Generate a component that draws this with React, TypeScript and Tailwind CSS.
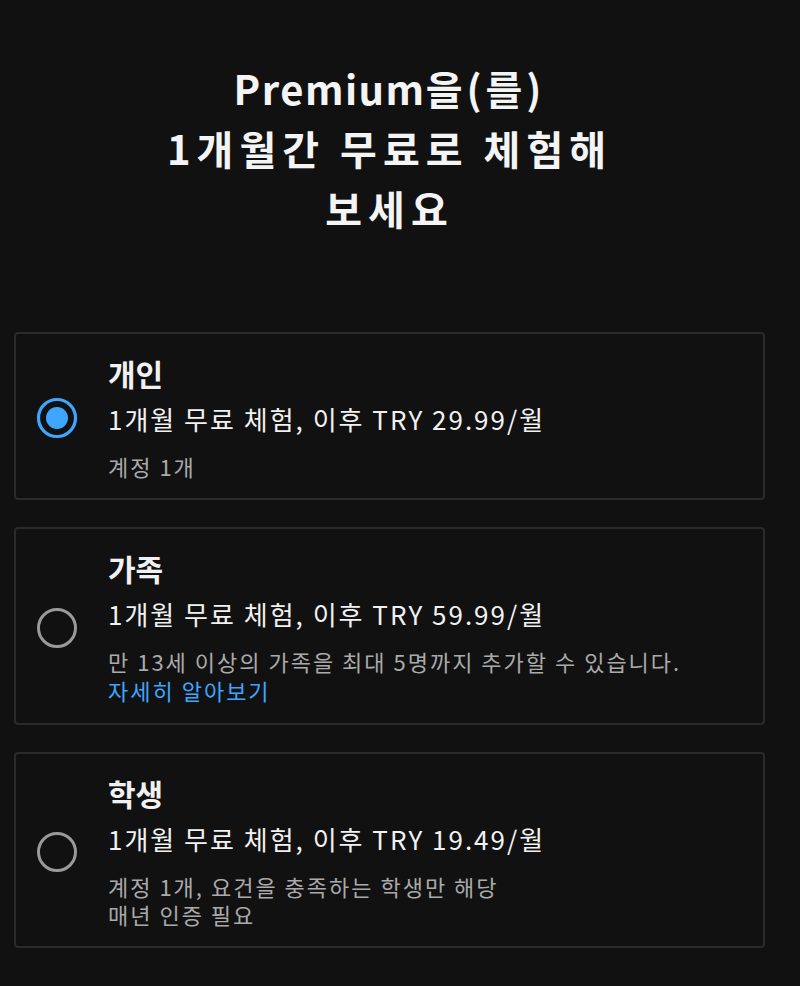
import React from "react";

const font = { fontFamily: '"Noto Sans CJK KR", "Noto Sans", sans-serif' };

function Radio({ checked }: { checked: boolean }) {
  return (
    <div className="w-[92px] shrink-0 flex justify-center pr-[10px]">
      {checked ? (
        <svg width="42" height="42" viewBox="0 0 42 42">
          <circle cx="21" cy="21" r="18.5" fill="none" stroke="#3ea6ff" strokeWidth="3.2" />
          <circle cx="21" cy="21" r="11" fill="#3ea6ff" />
        </svg>
      ) : (
        <svg width="42" height="42" viewBox="0 0 42 42">
          <circle cx="21" cy="21" r="18.5" fill="none" stroke="#9a9a9a" strokeWidth="3" />
        </svg>
      )}
    </div>
  );
}

function Card({
  checked,
  title,
  price,
  children,
}: {
  checked: boolean;
  title: string;
  price: string;
  children: React.ReactNode;
}) {
  return (
    <div className="flex items-center border-2 border-[#2a2a2a] rounded-[4px] pt-[21px] pb-[18px]">
      <Radio checked={checked} />
      <div className="flex flex-col">
        <div className="text-[30px] leading-[36px] font-bold text-[#f1f1f1]">{title}</div>
        <div className="mt-[11px] text-[26px] leading-[34px] tracking-[2px] text-[#f1f1f1]">{price}</div>
        <div className="mt-[16px] text-[22px] leading-[28px] tracking-[2px] text-[#aaaaaa]">{children}</div>
      </div>
    </div>
  );
}

export default function App() {
  return (
    <div className="min-h-[986px] w-full bg-[#111111]" style={font}>
      <div className="w-[779px] px-[14px]">
        <h1 className="pt-[58px] text-center text-[40px] leading-[60px] font-bold text-[#f4f4f4]">
          <span className="tracking-[1.5px]">Premium</span>
          <span className="tracking-[4px]">을(를)</span>
          <br />
          <span className="tracking-[6px]">1개월간 무료로 체험해</span>
          <br />
          <span className="tracking-[6px]">보세요</span>
        </h1>
        <div className="mt-[94px] flex flex-col gap-[27px]">
          <Card checked title="개인" price="1개월 무료 체험, 이후 TRY 29.99/월">
            계정 1개
          </Card>
          <Card checked={false} title="가족" price="1개월 무료 체험, 이후 TRY 59.99/월">
            <div>만 13세 이상의 가족을 최대 5명까지 추가할 수 있습니다.</div>
            <div className="text-[#3ea6ff] leading-[30px]">자세히 알아보기</div>
          </Card>
          <Card checked={false} title="학생" price="1개월 무료 체험, 이후 TRY 19.49/월">
            <div>계정 1개, 요건을 충족하는 학생만 해당</div>
            <div>매년 인증 필요</div>
          </Card>
        </div>
      </div>
    </div>
  );
}
